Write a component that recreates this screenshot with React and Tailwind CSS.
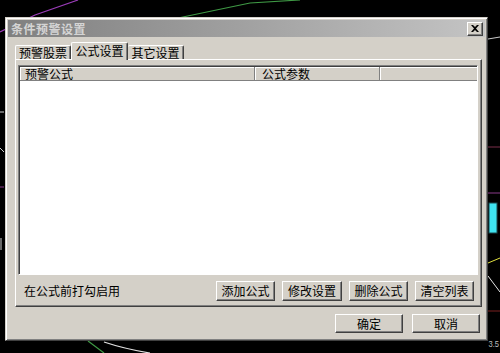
import React from 'react';

const font = { fontFamily: '"Noto Sans CJK SC", "Liberation Sans", sans-serif' };

// classic raised 3D border used by buttons / tabs
const raised =
  'border border-t-white border-l-white border-r-[#404040] border-b-[#404040] shadow-[inset_-1px_-1px_0_#808080]';

const Btn = ({ children, w, h = 'h-[20px]' }) => (
  <button
    className={`${raised} ${w} ${h} bg-[#d4d0c8] text-[12px] leading-none text-black flex items-center justify-center`}
  >
    {children}
  </button>
);

const Backdrop = () => (
  <svg className="absolute inset-0" width="500" height="353" viewBox="0 0 500 353">
    <rect width="500" height="353" fill="#000" />
    <polyline points="0,32 35,15 78,0" fill="none" stroke="#9a3cb8" strokeWidth="1.2" />
    <polyline points="178,18 250,3 300,0" fill="none" stroke="#3f9a45" strokeWidth="1.2" />
    <line x1="488" y1="39" x2="500" y2="37" stroke="#c8c8c8" strokeWidth="1" />
    <line x1="488" y1="147" x2="500" y2="147" stroke="#7a2f4a" strokeWidth="1" />
    <line x1="488" y1="193" x2="500" y2="193" stroke="#8a3a8a" strokeWidth="1" />
    <rect x="489" y="203" width="8" height="30" fill="#3fe3f0" stroke="#1a4a50" strokeWidth="1" />
    <line x1="488" y1="263" x2="500" y2="258" stroke="#e0e040" strokeWidth="1" />
    <line x1="488" y1="276" x2="500" y2="292" stroke="#e8e8e8" strokeWidth="1" />
    <line x1="488" y1="311" x2="500" y2="311" stroke="#7a2020" strokeWidth="1" />
    <text x="488.5" y="347" fill="#bdbdbd" fontSize="9" textLength="10.5" lengthAdjust="spacingAndGlyphs" fontFamily="Liberation Sans">3.5</text>
    <line x1="0" y1="112" x2="4" y2="112" stroke="#d0d0d0" />
    <line x1="0" y1="148" x2="4" y2="152" stroke="#d0d0d0" />
    <line x1="0" y1="187" x2="4" y2="187" stroke="#8a3a8a" />
    <line x1="1" y1="238" x2="1" y2="250" stroke="#d0d0d0" />
    <line x1="88" y1="341" x2="104" y2="353" stroke="#3f9a45" strokeWidth="1.2" />
    <path d="M104 342 Q125 349 150 353" fill="none" stroke="#e0e0e0" strokeWidth="1.2" />
  </svg>
);

export default function App() {
  return (
    <div className="relative w-[500px] h-[353px] overflow-hidden bg-black" style={font}>
      <Backdrop />
      <div className="relative pl-[5px] pt-[17px]">
        {/* dialog window */}
        <div className="w-[483px] h-[324px] bg-[#d4d0c8] border border-t-[#d4d0c8] border-l-[#d4d0c8] border-r-[#404040] border-b-[#404040] shadow-[inset_1px_1px_0_#fff,inset_-1px_-1px_0_#808080] p-[2px] flex flex-col">
          {/* title bar */}
          <div className="h-[17px] flex items-center justify-between pl-[3px] pr-[2px] bg-gradient-to-r from-[#808080] to-[#c4c4c4]">
            <span className="text-[12px] font-bold text-[#d4d4d4] leading-none tracking-[0.5px]">条件预警设置</span>
            <div className={`${raised} w-[16px] h-[14px] bg-[#d4d0c8] flex items-center justify-center`}>
              <svg width="8" height="7" viewBox="0 0 8 7">
                <path d="M0 0h2l2 2 2-2h2L5 3.5 8 7H6L4 5 2 7H0l3-3.5z" fill="#000" />
              </svg>
            </div>
          </div>

          {/* tabs */}
          <div className="mt-[4px] pl-[7px] flex items-end h-[18px]">
            <div className="h-[14px] w-[56px] border-t border-l border-t-white border-l-white border-r border-r-[#404040] shadow-[inset_-1px_0_0_#808080] rounded-t-[2px] text-[12px] leading-none flex items-center justify-center text-black">
              预警股票
            </div>
            <div className="relative z-10 h-[18px] w-[57px] -mb-px bg-[#d4d0c8] border-t border-l border-t-white border-l-white border-r border-r-[#404040] shadow-[inset_-1px_0_0_#808080] rounded-t-[2px] text-[12px] leading-none flex items-center justify-center text-black pb-[2px]">
              公式设置
            </div>
            <div className="h-[14px] w-[56px] border-t border-r border-t-white border-r-[#404040] shadow-[inset_-1px_0_0_#808080] rounded-t-[2px] text-[12px] leading-none flex items-center justify-center text-black">
              其它设置
            </div>
          </div>

          {/* tab panel */}
          <div className="ml-[7px] w-[467px] h-[248px] border border-t-white border-l-white border-r-[#404040] border-b-[#404040] shadow-[inset_-1px_-1px_0_#808080] pt-[5px] pl-[2px] flex flex-col">
            {/* list view */}
            <div className="w-[460px] h-[210px] border border-t-[#808080] border-l-[#808080] border-r-white border-b-white shadow-[inset_1px_1px_0_#404040] bg-white p-[1px] pr-0 pb-0">
              <div className="flex h-[14px] bg-[#d4d0c8] text-[12px] leading-none text-black">
                <div className="w-[235px] border-r border-b border-r-[#808080] border-b-[#808080] shadow-[inset_1px_1px_0_#fff] flex items-center pl-[5px]">
                  预警公式
                </div>
                <div className="w-[125px] border-r border-b border-r-[#808080] border-b-[#808080] shadow-[inset_1px_1px_0_#fff] flex items-center pl-[7px]">
                  公式参数
                </div>
                <div className="flex-1 border-b border-b-[#808080] shadow-[inset_1px_1px_0_#fff]" />
              </div>
            </div>

            {/* bottom row */}
            <div className="mt-[6px] flex items-center pr-[7px]">
              <span className="pl-[6px] text-[12px] leading-none text-black">在公式前打勾启用</span>
              <div className="ml-auto flex gap-[7px]">
                <Btn w="w-[59px]">添加公式</Btn>
                <Btn w="w-[60px]">修改设置</Btn>
                <Btn w="w-[59px]">删除公式</Btn>
                <Btn w="w-[59px]">清空列表</Btn>
              </div>
            </div>
          </div>

          {/* OK / cancel */}
          <div className="mt-[7px] flex justify-end gap-[9px] pr-[5px]">
            <Btn w="w-[68px]" h="h-[19px]">确定</Btn>
            <Btn w="w-[68px]" h="h-[19px]">取消</Btn>
          </div>
        </div>
      </div>
    </div>
  );
}
